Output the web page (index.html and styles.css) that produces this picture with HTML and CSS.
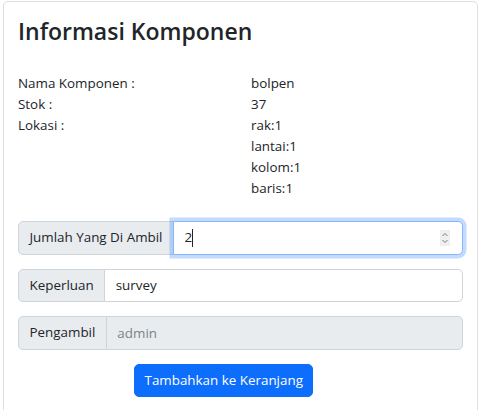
FILE: index.html
```html
<!DOCTYPE html>
<html lang="id">
<head>
<meta charset="utf-8">
<title>Informasi Komponen</title>
<link rel="stylesheet" href="styles.css">
</head>
<body>
<div class="card">
  <h2 class="title">Informasi Komponen</h2>
  <div class="info">
    <div class="label">Nama Komponen :</div>
    <div class="value">bolpen</div>
    <div class="label">Stok :</div>
    <div class="value">37</div>
    <div class="label">Lokasi :</div>
    <div class="value">rak:1<br>lantai:1<br>kolom:1<br>baris:1</div>
  </div>
  <form class="form">
    <div class="input-group">
      <span class="group-text">Jumlah Yang Di Ambil</span>
      <div class="control focused">
        <span class="typed">2</span><span class="caret"></span>
        <svg class="spin" width="10" height="16" viewBox="0 0 10 16" aria-hidden="true">
          <rect width="10" height="16" fill="#efefef"/>
          <path d="M2.5 6 L5 3.5 L7.5 6" fill="none" stroke="#7a7a7a" stroke-width="1"/>
          <path d="M2.5 10 L5 12.5 L7.5 10" fill="none" stroke="#7a7a7a" stroke-width="1"/>
        </svg>
      </div>
    </div>
    <div class="input-group">
      <span class="group-text">Keperluan</span>
      <input class="control" type="text" value="survey">
    </div>
    <div class="input-group">
      <span class="group-text">Pengambil</span>
      <input class="control disabled" type="text" placeholder="admin" disabled>
    </div>
    <button type="button" class="btn">Tambahkan ke Keranjang</button>
  </form>
</div>
</body>
</html>
```

FILE: styles.css
```css
* { box-sizing: border-box; }
html, body { margin: 0; padding: 0; background: #fff; }
body {
  font-family: "Open Sans", "Noto Sans", sans-serif;
  font-size: 13.4px;
  line-height: 21px;
  color: #212529;
}
.card {
  margin: 1px 2px 0 3px;
  border: 1px solid #dfdfdf;
  border-radius: 5px;
  padding: 14px 14px 20px;
  min-height: 420px;
}
.title {
  margin: 0 0 26px;
  font-size: 23px;
  line-height: 31px;
  font-weight: 600;
  padding-top: 0;
}
.info {
  display: grid;
  grid-template-columns: 233px 1fr;
  margin-bottom: 22px;
}
.form { display: flex; flex-direction: column; align-items: flex-start; }
.input-group {
  display: flex;
  width: 100%;
  margin-bottom: 14px;
}
.group-text {
  display: flex;
  align-items: center;
  padding: 5.25px 10.5px;
  background: #e9ecef;
  border: 1px solid #ced4da;
  border-radius: 5px 0 0 5px;
  white-space: nowrap;
  line-height: 21px;
}
.control {
  flex: 1;
  min-width: 0;
  margin-left: -1px;
  padding: 5.25px 10.5px;
  border: 1px solid #ced4da;
  border-radius: 0 5px 5px 0;
  font: inherit;
  line-height: 21px;
  color: #212529;
  background: #fff;
  height: 33.5px;
}
.focused {
  position: relative;
  display: flex;
  align-items: center;
  border-color: #86b7fe;
  box-shadow: 0 0 0 3.5px rgba(13, 110, 253, .25);
  z-index: 2;
}
.caret {
  display: inline-block;
  width: 1px;
  height: 18px;
  background: #212529;
}
.spin {
  position: absolute;
  right: 12px;
  top: 8px;
}
.disabled {
  background: #e9ecef;
}
.disabled::placeholder { color: #7d8286; }
.btn {
  margin-left: 116px;
  font: inherit;
  line-height: 21px;
  color: #fff;
  background: #0d6efd;
  border: 1px solid #0d6efd;
  border-radius: 5px;
  padding: 5.25px 9.5px;
  cursor: pointer;
}
```
